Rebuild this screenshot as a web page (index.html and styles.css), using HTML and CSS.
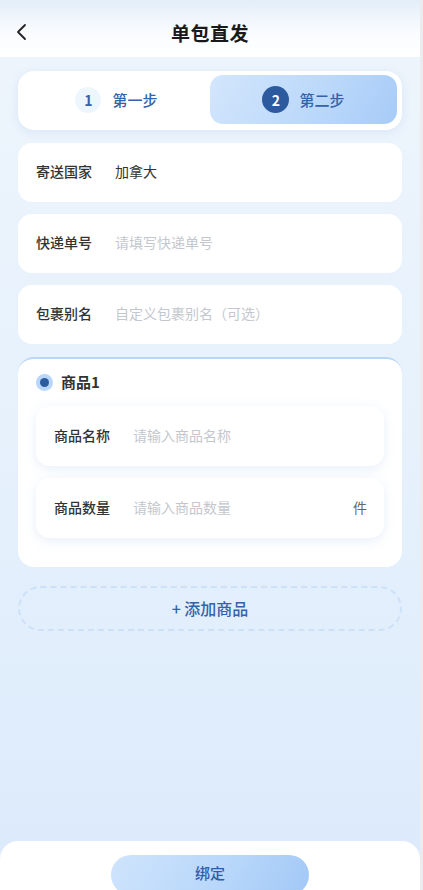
FILE: index.html
```html
<!DOCTYPE html>
<html lang="zh-CN">
<head>
    <meta charset="UTF-8">
    <meta name="viewport" content="width=device-width, initial-scale=1.0">
    <title>单包直发</title>
    <link rel="stylesheet" href="styles.css">
</head>
<body>
    <div class="app">
        <header class="topbar">
            <svg class="back" width="12" height="18" viewBox="0 0 12 18">
                <polyline points="9,2 2,9 9,16" fill="none" stroke="#222" stroke-width="1.8" stroke-linecap="round" stroke-linejoin="round"/>
            </svg>
            <h1 class="title">单包直发</h1>
        </header>

        <main class="content">
            <div class="steps">
                <div class="step">
                    <span class="step-num">1</span>
                    <span class="step-text">第一步</span>
                </div>
                <div class="step active">
                    <span class="step-num">2</span>
                    <span class="step-text">第二步</span>
                </div>
            </div>

            <div class="field">
                <span class="label">寄送国家</span>
                <span class="value">加拿大</span>
            </div>
            <div class="field">
                <span class="label">快递单号</span>
                <span class="placeholder">请填写快递单号</span>
            </div>
            <div class="field">
                <span class="label">包裹别名</span>
                <span class="placeholder">自定义包裹别名（可选）</span>
            </div>

            <div class="goods">
                <div class="goods-head">
                    <span class="radio"></span>
                    <span class="goods-title">商品1</span>
                </div>
                <div class="field inner">
                    <span class="label">商品名称</span>
                    <span class="placeholder">请输入商品名称</span>
                </div>
                <div class="field inner">
                    <span class="label">商品数量</span>
                    <span class="placeholder">请输入商品数量</span>
                    <span class="unit">件</span>
                </div>
            </div>

            <div class="add-btn">+ 添加商品</div>
        </main>

        <footer class="footer">
            <div class="submit">绑定</div>
        </footer>
    </div>
</body>
</html>
```

FILE: styles.css
```css
* {
    box-sizing: border-box;
}
body {
    margin: 0;
    background: #ececee;
    font-family: "Noto Sans CJK SC", "Noto Sans", sans-serif;
    color: #333;
}
.app {
    width: 420px;
    height: 890px;
    display: flex;
    flex-direction: column;
    overflow: hidden;
    background: linear-gradient(180deg, #eef5fc 0%, #e6f1fc 50%, #dbeafb 100%);
}

/* header */
.topbar {
    height: 57px;
    flex-shrink: 0;
    display: flex;
    align-items: center;
    justify-content: center;
    position: relative;
    background: linear-gradient(180deg, #e3eef9 0%, #f9fcff 55%, #ffffff 100%);
}
.back {
    position: absolute;
    left: 16px;
    top: 23px;
}
.title {
    margin: 0;
    margin-top: 7px;
    font-size: 19px;
    font-weight: 700;
    color: #1a1a1a;
    letter-spacing: 0.5px;
}

.content {
    flex: 1;
    padding: 14px 18px 0;
}

/* steps */
.steps {
    display: flex;
    background: #fff;
    border-radius: 16px;
    padding: 4px 5px 6px;
    box-shadow: 0 2px 8px rgba(160, 195, 235, 0.25);
}
.step {
    flex: 1;
    height: 49px;
    display: flex;
    align-items: center;
    justify-content: center;
    gap: 11px;
    border-radius: 13px;
}
.step.active {
    background: linear-gradient(120deg, #d3e6fc 0%, #bcd9fa 55%, #a7cbf7 100%);
    gap: 10px;
}
.step-num {
    width: 26px;
    height: 26px;
    border-radius: 50%;
    background: #edf5fd;
    color: #3562a8;
    font-size: 14px;
    font-weight: 700;
    display: flex;
    align-items: center;
    justify-content: center;
}
.step.active .step-num {
    background: #2c5a9f;
    color: #fff;
    width: 27px;
    height: 27px;
}
.step-text {
    font-size: 15px;
    font-weight: 500;
    color: #3562a8;
    padding-bottom: 1px;
}

/* fields */
.field {
    height: 59px;
    margin-top: 12px;
    background: #fff;
    border-radius: 14px;
    display: flex;
    align-items: center;
    padding: 0 18px 3px;
    font-size: 14px;
}
.steps + .field {
    margin-top: 13px;
}
.label {
    width: 79px;
    flex-shrink: 0;
    font-weight: 500;
    color: #333;
}
.value {
    color: #333;
}
.placeholder {
    color: #c4c8ce;
    flex: 1;
}
.unit {
    color: #666;
    margin-right: -1px;
}

/* goods */
.goods {
    margin-top: 13px;
    background: #fff;
    border-radius: 16px;
    border-top: 2px solid #b9d7f8;
    padding: 10px 18px 29px;
}
.goods-head {
    display: flex;
    align-items: center;
    gap: 8px;
    height: 26px;
}
.radio {
    width: 17px;
    height: 17px;
    border-radius: 50%;
    background: #b7d6fa;
    display: flex;
    align-items: center;
    justify-content: center;
}
.radio::after {
    content: "";
    width: 9px;
    height: 9px;
    border-radius: 50%;
    background: #2c5a9f;
}
.goods-title {
    font-size: 15px;
    font-weight: 700;
    color: #333;
    padding-bottom: 2px;
}
.field.inner {
    height: 60px;
    margin-top: 12px;
    box-shadow: 0 3px 12px rgba(170, 200, 235, 0.28);
}
.goods-head + .field.inner {
    margin-top: 11px;
}

/* add */
.add-btn {
    margin-top: 19px;
    height: 45px;
    border: 2px dashed #cce1f8;
    border-radius: 23px;
    display: flex;
    align-items: center;
    justify-content: center;
    font-size: 16px;
    font-weight: 500;
    color: #3562a8;
    padding-bottom: 1px;
}

/* footer */
.footer {
    height: 49px;
    flex-shrink: 0;
    background: #fff;
    border-radius: 18px 18px 0 0;
    padding-top: 14px;
    display: flex;
    justify-content: center;
}
.submit {
    width: 198px;
    height: 40px;
    flex-shrink: 0;
    border-radius: 20px;
    background: linear-gradient(120deg, #cfe4fc 0%, #b6d6fa 60%, #a2c8f6 100%);
    display: flex;
    align-items: flex-start;
    padding-top: 7px;
    justify-content: center;
    font-size: 15px;
    font-weight: 500;
    color: #2f5ea8;
}
```
